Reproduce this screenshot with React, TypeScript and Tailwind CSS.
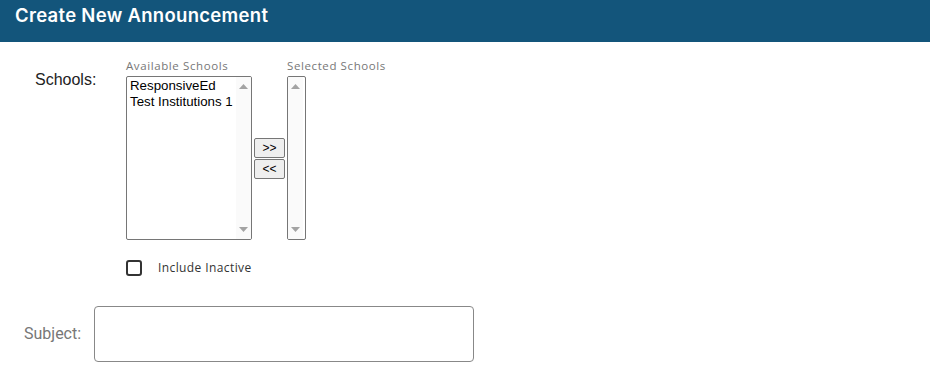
import { useState } from "react";

function Scrollbar() {
  return (
    <div className="flex w-[15px] flex-col items-center justify-between bg-[#fafafa] py-[7px]">
      <svg width="9" height="5" viewBox="0 0 9 5">
        <path d="M0 5 L4.5 0 L9 5 Z" fill="#a3a3a3" />
      </svg>
      <svg width="9" height="5" viewBox="0 0 9 5">
        <path d="M0 0 L4.5 5 L9 0 Z" fill="#a3a3a3" />
      </svg>
    </div>
  );
}

export default function App() {
  const [available] = useState(["ResponsiveEd", "Test Institutions 1"]);
  const [inactive, setInactive] = useState(false);

  return (
    <div className="h-[379px] w-[930px] bg-white font-['Liberation_Sans',Arial,sans-serif]">
      {/* HEADER */}
      <div className="flex h-[42px] items-start bg-[#13557b] px-[15px] pt-[2px]">
        <h1 className="font-['Inter',sans-serif] text-[18.5px] font-semibold tracking-[0.3px] text-white">
          Create New Announcement
        </h1>
      </div>

      {/* SCHOOLS */}
      <div className="flex pt-[17px]">
        <div className="w-[126px] pl-[35px] pt-[11px] text-[16px] leading-[20px] text-[#222]">
          Schools:
        </div>

        <div className="flex flex-col">
          <div className="flex">
            <div className="flex flex-col">
              <span className="mb-[4px] font-['Open_Sans',sans-serif] text-[11.5px] leading-[13px] tracking-[0.6px] text-[#777]">
                Available Schools
              </span>
              <div className="flex h-[164px] w-[126px] overflow-hidden rounded-[2px] border border-[#767676]">
                <div className="flex-1 pl-[3px] pt-[1px] text-[13.3px] leading-[16px] text-black">
                  {available.map((s) => (
                    <div key={s}>{s}</div>
                  ))}
                </div>
                <Scrollbar />
              </div>
            </div>

            <div className="mx-[2px] flex flex-col justify-center gap-[1px] pt-[17px]">
              <button className="h-[20px] w-[31px] rounded-[2px] border border-[#767676] bg-[#efefef] text-[12px] leading-none text-black">
                &gt;&gt;
              </button>
              <button className="h-[20px] w-[31px] rounded-[2px] border border-[#767676] bg-[#efefef] text-[12px] leading-none text-black">
                &lt;&lt;
              </button>
            </div>

            <div className="flex flex-col">
              <span className="mb-[4px] whitespace-nowrap font-['Open_Sans',sans-serif] text-[11.5px] leading-[13px] tracking-[0.6px] text-[#777]">
                Selected Schools
              </span>
              <div className="flex h-[164px] w-[19px] overflow-hidden rounded-[2px] border border-[#767676]">
                <Scrollbar />
              </div>
            </div>
          </div>

          <label className="mt-[19px] flex items-center gap-[16px]">
            <span
              onClick={() => setInactive(!inactive)}
              className="h-[16px] w-[16px] rounded-[3px] border-2 border-[#333] bg-white"
            />
            <span className="font-['Open_Sans',sans-serif] text-[12px] tracking-[0.4px] text-[#333]">
              Include Inactive
            </span>
          </label>
        </div>
      </div>

      {/* SUBJECT */}
      <div className="mt-[29px] flex items-center">
        <span className="w-[94px] pl-[24px] font-['Roboto',sans-serif] text-[16px] text-[#777]">
          Subject:
        </span>
        <input
          type="text"
          className="h-[56px] w-[380px] rounded-[4px] border border-[#888] px-2 outline-none"
        />
      </div>
    </div>
  );
}
